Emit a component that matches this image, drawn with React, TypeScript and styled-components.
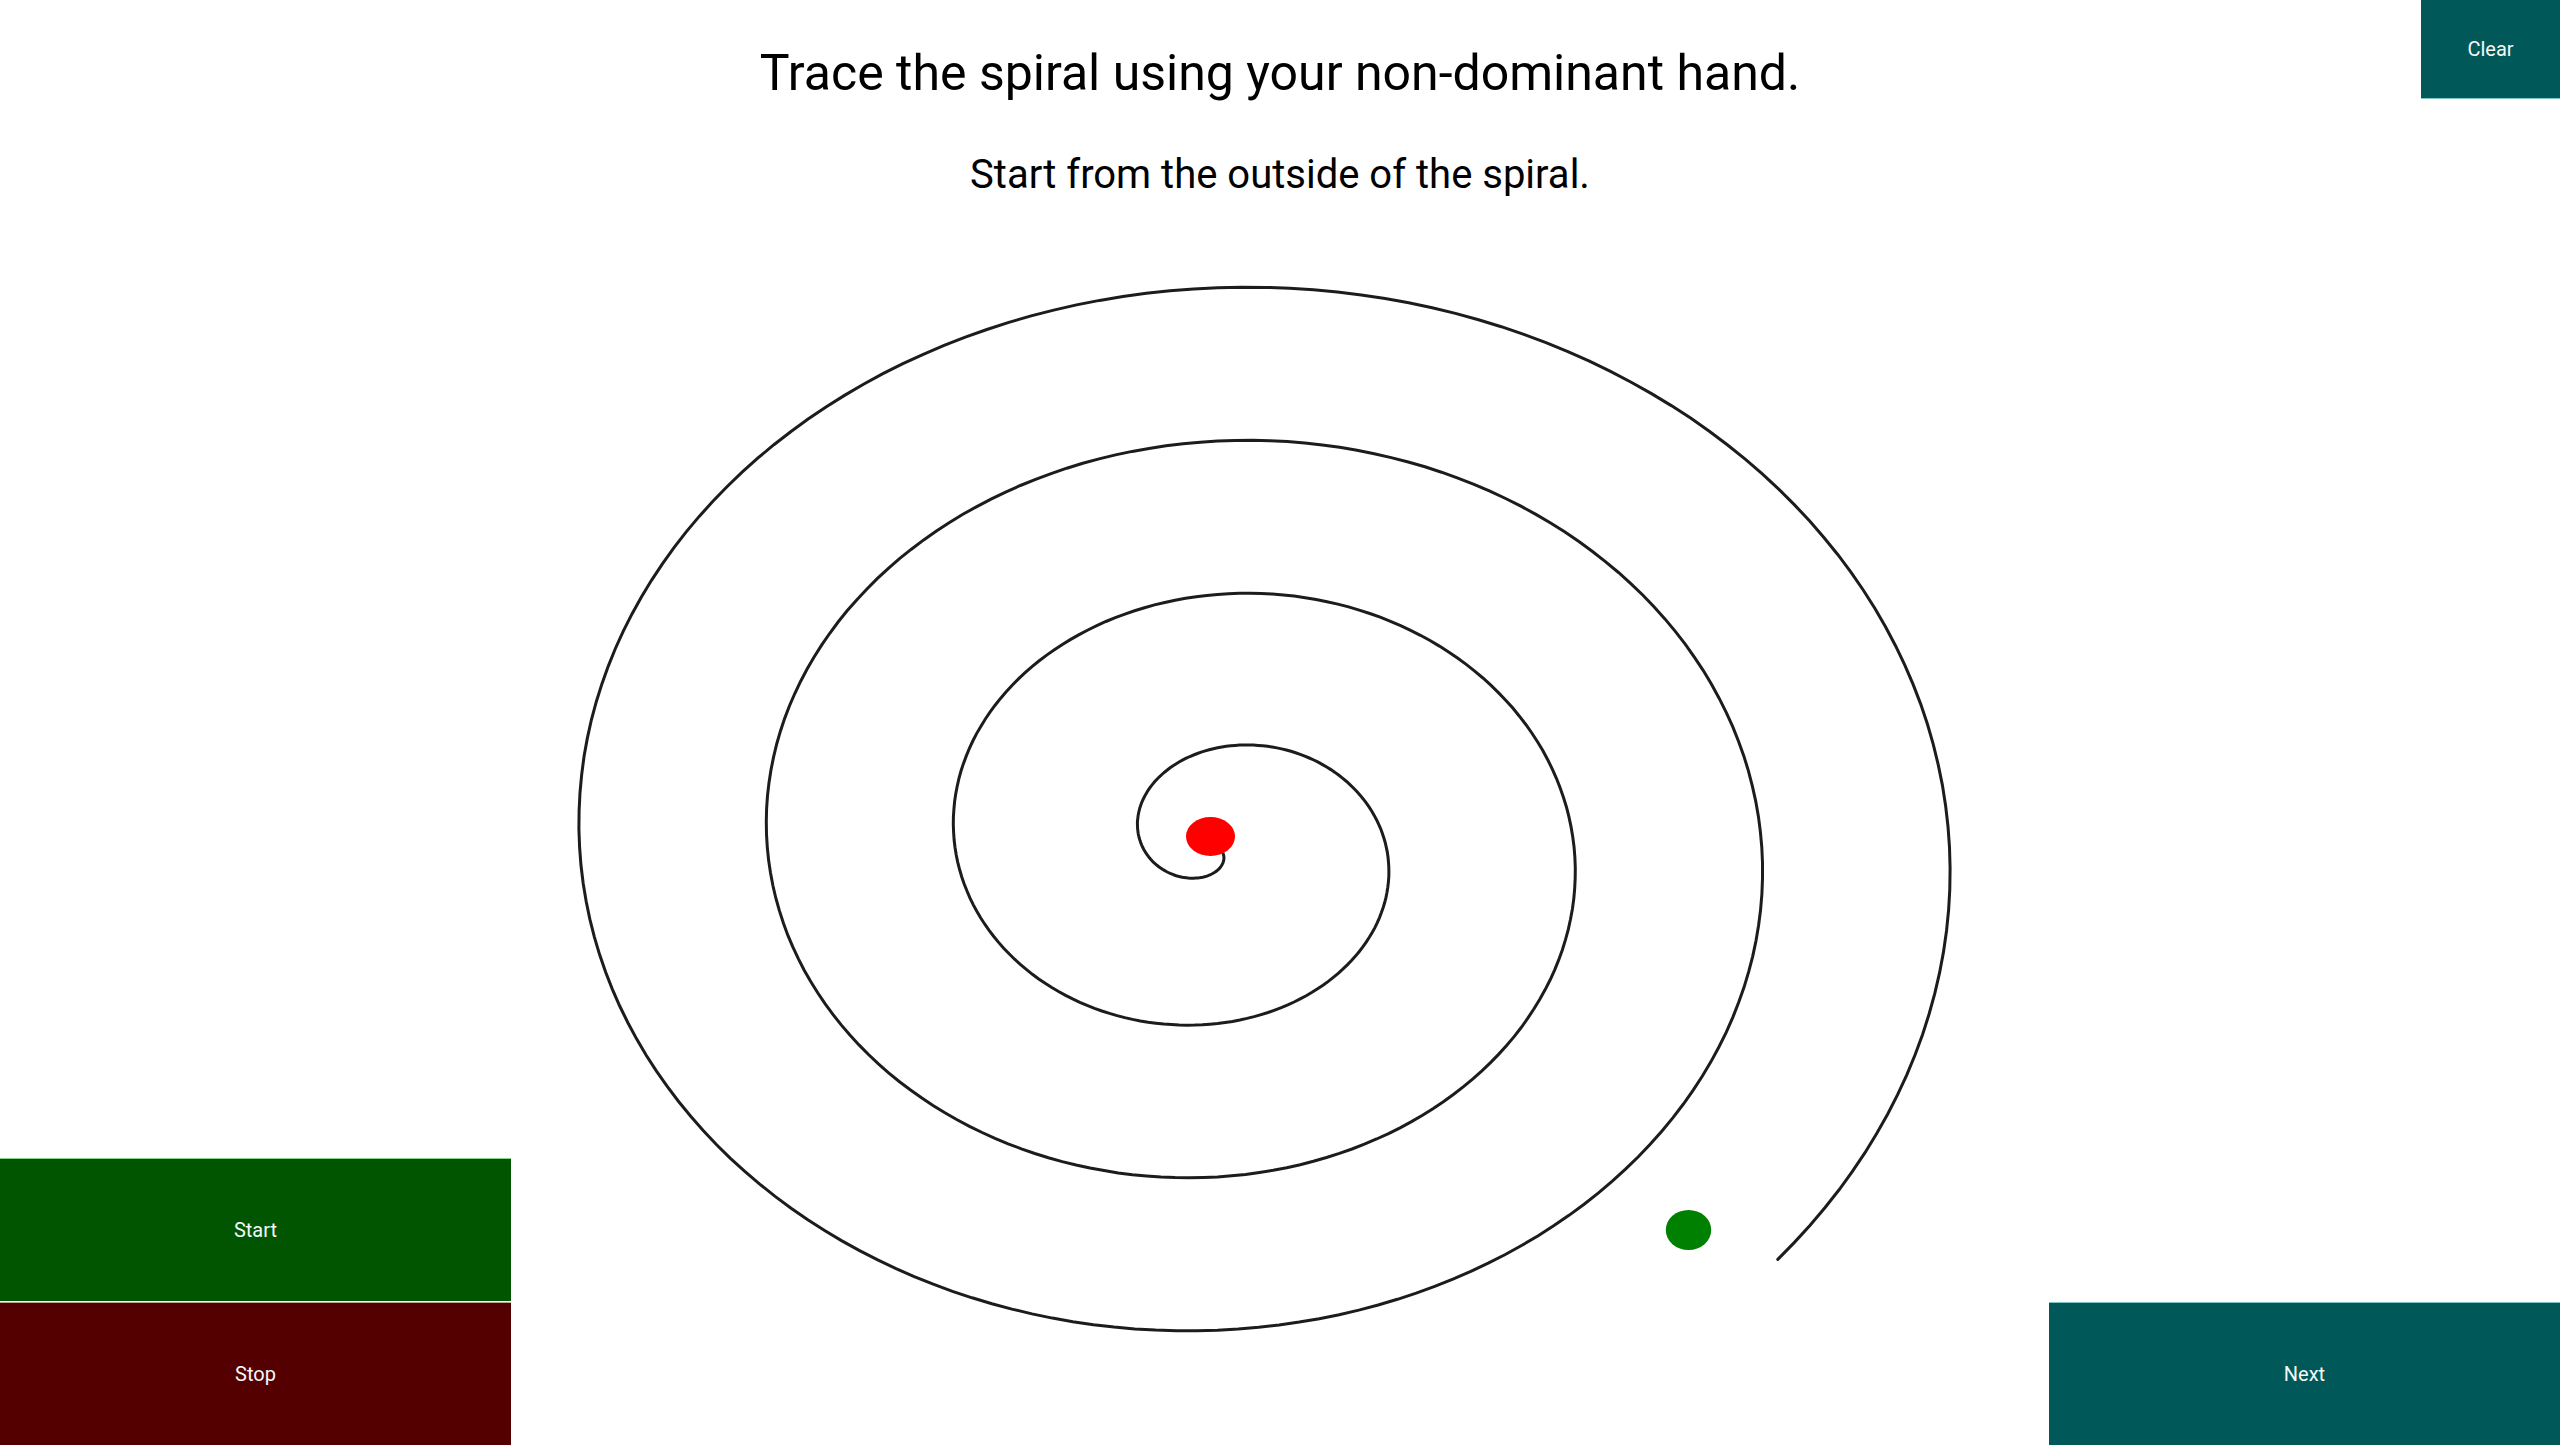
import styled, { createGlobalStyle } from "styled-components";

const GlobalStyle = createGlobalStyle`
  html, body {
    margin: 0;
    padding: 0;
    background: #ffffff;
    font-family: "Roboto", "Liberation Sans", sans-serif;
  }
`;

const tones = {
  teal: { bg: "#005858", edge: "#7fc6c6" },
  green: { bg: "#015501", edge: "#86d586" },
  red: { bg: "#550000", edge: "#b9a79a" },
};

type Tone = keyof typeof tones;

const Page = styled.div`
  width: 100vw;
  height: 100vh;
  display: flex;
  flex-direction: column;
  background: #ffffff;
  overflow: hidden;
`;

const Header = styled.header`
  display: grid;
  grid-template-columns: 139px 1fr 139px;
  align-items: start;
  height: 199px;
`;

const Prompt = styled.div`
  grid-column: 2;
  display: flex;
  flex-direction: column;
  align-items: center;
  padding-top: 42px;
  gap: 48px;
  color: #000000;
`;

const Title = styled.h1`
  margin: 0;
  font-weight: 400;
  font-size: 50px;
  line-height: 62px;
`;

const Subtitle = styled.h2`
  margin: 0;
  font-weight: 400;
  font-size: 40px;
  line-height: 46px;
`;

const Button = styled.button<{ $tone: Tone; $h: number; $edge?: "top" | "bottom" }>`
  display: flex;
  align-items: center;
  justify-content: center;
  width: 100%;
  height: ${(p) => p.$h}px;
  border: none;
  padding: 0;
  margin: 0;
  background: ${(p) => tones[p.$tone].bg};
  color: #f4f8f6;
  font-family: "Roboto", "Liberation Sans", sans-serif;
  font-size: 20px;
  box-shadow: 0 ${(p) => (p.$edge === "bottom" ? "1px" : "-1px")} 0
    ${(p) => tones[p.$tone].edge};
  cursor: pointer;
`;

const ClearSlot = styled.div`
  grid-column: 3;
`;

const Body = styled.main`
  flex: 1;
  display: grid;
  grid-template-columns: 511px 1fr 511px;
  min-height: 0;
`;

const Side = styled.div`
  display: flex;
  flex-direction: column;
  justify-content: flex-end;
  gap: 2px;
  padding-bottom: 3px;
`;

const Canvas = styled.svg`
  display: block;
  width: 100%;
  height: 100%;
`;

// spiral traced from the image: r grows 0.426 per degree, stretched 1.224 wide
const CX = 1217.6;
const CY = 847.3;

const spiralPath = () => {
  const pts: string[] = [];
  for (let deg = 50; deg <= 1482; deg += 2) {
    const t = (deg * Math.PI) / 180;
    const r = 0.426 * deg - 15.5;
    const x = CX + 1.224 * r * Math.cos(t);
    const y = CY + r * Math.sin(t);
    pts.push(`${pts.length ? "L" : "M"}${x.toFixed(1)} ${y.toFixed(1)}`);
  }
  return pts.join(" ");
};

const Spiral = () => (
  <Canvas viewBox="511 199 1538 1249" preserveAspectRatio="none">
    <path d={spiralPath()} fill="none" stroke="#1c1c1c" strokeWidth={3} strokeLinecap="round" />
    <ellipse cx={1210.5} cy={836.5} rx={24.5} ry={19.5} fill="#ff0000" />
    <ellipse cx={1688.5} cy={1230} rx={22.7} ry={20} fill="#008000" />
  </Canvas>
);

const App = () => {
  return (
    <>
      <GlobalStyle />
      <Page>
        <Header>
          <Prompt>
            <Title>Trace the spiral using your non-dominant hand.</Title>
            <Subtitle>Start from the outside of the spiral.</Subtitle>
          </Prompt>
          <ClearSlot>
            <Button $tone="teal" $h={98} $edge="bottom">
              Clear
            </Button>
          </ClearSlot>
        </Header>
        <Body>
          <Side>
            <Button $tone="green" $h={142}>
              Start
            </Button>
            <Button $tone="red" $h={142}>
              Stop
            </Button>
          </Side>
          <Spiral />
          <Side>
            <Button $tone="teal" $h={142}>
              Next
            </Button>
          </Side>
        </Body>
      </Page>
    </>
  );
};

export default App;
